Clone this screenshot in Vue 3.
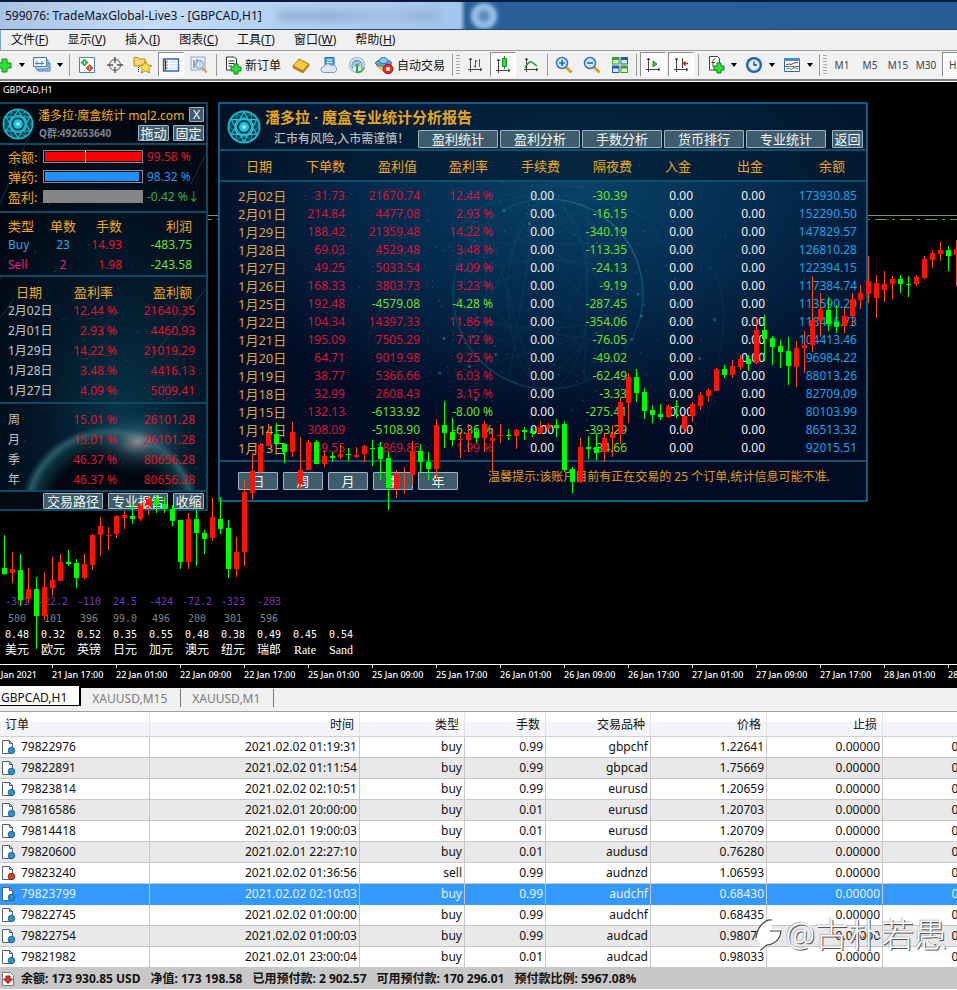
<script setup>
const menus = [
  ['文件', 'F'], ['显示', 'V'], ['插入', 'I'], ['图表', 'C'], ['工具', 'T'], ['窗口', 'W'], ['帮助', 'H'],
]
const frames = ['M1', 'M5', 'M15', 'M30']

// Each candle: high, low, body top, body bottom, 1 = red / 0 = green
const candles = [
  [535,575,568,574,0],[552,583,569,573,1],[554,606,570,600,0],[568,603,589,599,1],[577,649,589,616,0],
  [572,620,587,616,1],[557,596,580,588,1],[554,581,562,581,1],[550,566,562,564,0],[559,588,563,578,0],
  [554,579,564,578,1],[534,570,535,565,1],[517,556,526,535,1],[527,550,535,536,1],[515,538,516,534,1],
  [511,529,515,518,1],[503,524,516,519,0],[503,521,505,519,1],[496,515,499,505,1],[495,513,499,505,0],
  [497,513,504,509,0],[505,526,509,521,0],[520,569,520,562,0],[513,569,519,562,1],[510,566,519,533,0],
  [530,554,533,539,0],[498,541,517,538,1],[497,534,519,529,0],[520,578,528,569,0],[537,577,552,569,1],
  [481,566,492,552,1],[453,500,471,493,1],[443,473,445,472,1],[424,446,433,446,1],[423,446,434,444,0],
  [443,463,444,452,0],[422,457,432,452,1],[437,490,470,484,1],[440,470,442,470,1],[440,464,442,464,0],
  [450,467,456,464,1],[452,462,456,458,0],[445,459,454,457,1],[448,461,454,455,0],[447,458,455,457,1],
  [445,462,446,454,1],[440,466,448,449,0],[442,480,447,459,0],[452,510,458,488,0],[470,498,474,489,1],
  [467,494,481,482,1],[441,485,451,475,1],[444,472,451,462,0],[452,480,462,469,0],[419,480,425,469,1],
  [401,448,425,433,0],[418,446,432,440,0],[432,458,439,440,1],[424,452,433,440,1],[428,443,432,438,0],
  [421,452,424,438,1],[428,472,438,441,1],[424,443,435,436,1],[429,440,435,436,0],[429,449,430,436,1],
  [427,440,430,432,0],[428,437,431,433,0],[421,434,427,433,1],[423,430,425,428,1],[419,437,425,428,0],
  [421,472,424,470,0],[467,493,469,482,0],[438,483,447,482,1],[436,459,447,449,0],[433,460,447,453,0],
  [433,462,438,452,1],[425,457,434,438,1],[398,444,402,434,1],[373,423,377,403,1],[369,402,377,393,0],
  [388,419,392,411,0],[405,423,410,415,0],[404,420,414,417,0],[404,418,406,417,1],[400,418,406,407,0],
  [415,432,416,429,1],[402,422,404,416,1],[392,410,395,406,1],[388,402,390,396,1],[368,391,369,391,1],
  [365,378,369,375,0],[360,378,366,375,1],[355,370,359,367,1],[355,371,359,364,0],[317,364,330,363,1],
  [315,361,330,339,0],[336,365,338,347,0],[340,368,346,352,0],[337,385,351,366,0],[341,387,348,367,1],
  [331,373,345,348,1],[276,352,320,345,1],[293,337,309,321,1],[297,331,310,324,0],[305,333,322,327,0],
  [308,333,316,326,1],[293,325,299,316,1],[285,309,293,300,1],[256,303,281,294,1],[275,318,283,298,1],
  [271,302,284,290,1],[276,299,279,284,1],[275,293,279,284,0],[276,297,284,285,0],[275,286,277,284,1],
  [256,279,259,278,1],[250,268,253,260,1],[242,261,250,254,1],[246,271,250,256,0],[240,286,249,255,1],
].map(([high, low, top, bottom, red], i) => ({
  x: 4 + i * 8, high, low, top, size: Math.max(1, bottom - top), cls: red ? 'red' : 'green',
}))

const times = ['20 Jan 2021', '21 Jan 17:00', '22 Jan 01:00', '22 Jan 09:00', '22 Jan 17:00', '25 Jan 01:00', '25 Jan 09:00', '25 Jan 17:00', '26 Jan 01:00', '26 Jan 09:00', '26 Jan 17:00', '27 Jan 01:00', '27 Jan 09:00', '27 Jan 17:00', '28 Jan 01:00', '28 Jan 09:00']

const strengths = [
  ['-301', '500', '0.48', '美元'], ['-22.2', '101', '0.32', '欧元'], ['-110', '396', '0.52', '英镑'],
  ['24.5', '99.0', '0.35', '日元'], ['-424', '496', '0.55', '加元'], ['-72.2', '200', '0.48', '澳元'],
  ['-323', '301', '0.38', '纽元'], ['-203', '596', '0.49', '瑞郎'], ['', '', '0.45', 'Rate'], ['', '', '0.54', 'Sand'],
]

const gauges = [
  { name: '余额:', value: '99.58 %', kind: 'loss', fill: 100, mark: true },
  { name: '弹药:', value: '98.32 %', kind: 'ammo', fill: 98 },
  { name: '盈利:', value: '-0.42 %↓', kind: 'gain', fill: 100 },
]
const daily = [
  ['2月02日', '12.44 %', '21640.35'], ['2月01日', '2.93 %', '4460.93'], ['1月29日', '14.22 %', '21019.29'],
  ['1月28日', '3.48 %', '4416.13'], ['1月27日', '4.09 %', '5009.41'],
]
const periods = [
  ['周', '15.01 %', '26101.28'], ['月', '15.01 %', '26101.28'], ['季', '46.37 %', '80656.28'], ['年', '46.37 %', '80656.28'],
]

const reportTabs = ['盈利统计', '盈利分析', '手数分析', '货币排行', '专业统计']
const reportHead = ['日期', '下单数', '盈利值', '盈利率', '手续费', '隔夜费', '入金', '出金', '余额']
const reportRows = [
  ['2月02日', '31.73', '21670.74', '12.44 %', '-30.39', '173930.85'],
  ['2月01日', '214.84', '4477.08', '2.93 %', '-16.15', '152290.50'],
  ['1月29日', '188.42', '21359.48', '14.22 %', '-340.19', '147829.57'],
  ['1月28日', '69.03', '4529.48', '3.48 %', '-113.35', '126810.28'],
  ['1月27日', '49.25', '5033.54', '4.09 %', '-24.13', '122394.15'],
  ['1月26日', '168.33', '3803.73', '3.23 %', '-9.19', '117384.74'],
  ['1月25日', '192.48', '-4579.08', '-4.28 %', '-287.45', '113590.20'],
  ['1月22日', '104.34', '14397.33', '11.86 %', '-354.06', '118456.73'],
  ['1月21日', '195.09', '7505.29', '7.12 %', '-76.05', '104413.46'],
  ['1月20日', '64.71', '9019.98', '9.25 %', '-49.02', '96984.22'],
  ['1月19日', '38.77', '5366.66', '6.03 %', '-62.49', '88013.26'],
  ['1月18日', '32.99', '2608.43', '3.15 %', '-3.33', '82709.09'],
  ['1月15日', '132.13', '-6133.92', '-8.00 %', '-275.41', '80103.99'],
  ['1月14日', '308.09', '-5108.90', '-6.36 %', '-393.29', '86513.32'],
  ['1月13日', '139.55', '1869.86', '1.99 %', '-34.66', '92015.51'],
].map(([date, lots, profit, rate, swap, balance]) => ({ date, lots, profit, rate, swap, balance }))
const sign = (t) => (t.startsWith('-') ? 'minus' : 'plus')

const stars = Array.from({ length: 130 }, (_, i) => {
  const a = i * 2.399
  const r = 60 + ((i * 37) % 75)
  return { x: 328 + Math.cos(a) * r * (i % 3 === 0 ? 1.5 : 1), y: 190 + Math.sin(a) * r, r: i % 7 === 0 ? 2 : 1 }
})
const webs = Array.from({ length: 22 }, (_, i) => {
  const a = i * 0.286
  const b = a + 1.7 + (i % 4) * 0.3
  return { x1: 328 + Math.cos(a) * 94, y1: 190 + Math.sin(a) * 94, x2: 328 + Math.cos(b) * 94, y2: 190 + Math.sin(b) * 94 }
})
const dust = Array.from({ length: 60 }, (_, i) => ({ x: (i * 83) % 205, y: (i * 61 + 13) % 400 }))

const orderHead = ['订单', '时间', '类型', '手数', '交易品种', '价格', '止损', '止盈']
const orders = [
  ['79822976', '2021.02.02 01:19:31', 'buy', '0.99', 'gbpchf', '1.22641'],
  ['79822891', '2021.02.02 01:11:54', 'buy', '0.99', 'gbpcad', '1.75669'],
  ['79823814', '2021.02.02 02:10:51', 'buy', '0.99', 'eurusd', '1.20659'],
  ['79816586', '2021.02.01 20:00:00', 'buy', '0.01', 'eurusd', '1.20703'],
  ['79814418', '2021.02.01 19:00:03', 'buy', '0.01', 'eurusd', '1.20709'],
  ['79820600', '2021.02.01 22:27:10', 'buy', '0.01', 'audusd', '0.76280'],
  ['79823240', '2021.02.02 01:36:56', 'sell', '0.99', 'audnzd', '1.06593'],
  ['79823799', '2021.02.02 02:10:03', 'buy', '0.99', 'audchf', '0.68430'],
  ['79822745', '2021.02.02 01:00:00', 'buy', '0.99', 'audchf', '0.68435'],
  ['79822754', '2021.02.02 01:00:03', 'buy', '0.99', 'audcad', '0.98076'],
  ['79821982', '2021.02.01 23:00:04', 'buy', '0.01', 'audcad', '0.98033'],
]
const account = ['余额: 173 930.85 USD', '净值: 173 198.58', '已用预付款: 2 902.57', '可用预付款: 170 296.01', '预付款比例: 5967.08%']
</script>

<template>
  <div class="app">
    <svg width="0" height="0" class="defs" aria-hidden="true">
      <defs>
        <symbol id="seal" viewBox="0 0 32 32">
          <circle cx="16" cy="16" r="14.6" fill="#063a4c" stroke="#1fb4c8" stroke-width="1.8" />
          <g fill="none" stroke="#22c3d6" stroke-width="1.1">
            <path d="M16 2 28 23H4ZM16 30 4 9H28Z" />
            <path d="M2 16 23 4V28ZM30 16 9 4V28Z" stroke-width=".6" />
            <circle cx="16" cy="16" r="8.5" />
          </g>
          <circle cx="16" cy="16" r="4.8" fill="#19c8e0" /><circle cx="16" cy="16" r="1.6" fill="#d6ffff" />
        </symbol>
        <symbol id="cross" viewBox="0 0 12 12">
          <path d="M4 1h4v3h3v4H8v3H4V8H1V4h3z" fill="#2fe03a" stroke="#068a10" />
        </symbol>
      </defs>
    </svg>

    <header class="titlebar">
      <h1>599076: TradeMaxGlobal-Live3 - [GBPCAD,H1]</h1>
      <span class="haze"></span><span class="orb"></span>
    </header>

    <nav class="menubar">
      <a v-for="m in menus" :key="m[1]" href="#">{{ m[0] }}(<u>{{ m[1] }}</u>)</a>
    </nav>

    <div class="toolbar">
      <button class="tool first" aria-label="新建图表"><svg width="18" height="20"><path d="M2 4h5v4h4v5H7v4H2v-4h-6V8h6z" fill="#2fe03a" stroke="#068a10" /></svg></button>
      <button class="drop" aria-label="展开"><svg width="6" height="4"><path d="M0 0h6L3 4z" /></svg></button>
      <button class="tool" aria-label="模板窗口"><svg width="20" height="20"><path d="M6 8h12v8H6z" fill="#b7d0ee" stroke="#4b78b0" /><path d="M4 5h12v9H4z" fill="#d5e5f7" stroke="#4b78b0" /><path d="M1.500 2.500h13v9h-13z" fill="#f4f9ff" stroke="#4b78b0" /><path d="M3 8.500h9M5 6v4M10 6v4" stroke="#4b78b0" /></svg></button>
      <button class="drop" aria-label="展开"><svg width="6" height="4"><path d="M0 0h6L3 4z" /></svg></button>
      <i class="sep"></i>
      <button class="tool" aria-label="市场报价"><svg width="18" height="18"><path d="M1.500 1.500h15v15h-15z" fill="#fff" stroke="#4b83c4" /><path d="m6.500 3 3.500 3.500-3.500 3.500L3 6.500z" fill="#29c03a" stroke="#14751f" stroke-width=".6" /><path d="m11.500 8.500 3.500 3.500-3.500 3.500L8 12z" fill="#ef4a2c" stroke="#a02010" stroke-width=".6" /><path d="M6.500 5v3M11.500 10.500v3" stroke="#fff" /></svg></button>
      <button class="tool" aria-label="十字线"><svg width="18" height="18" fill="none" stroke="#555"><circle cx="9" cy="9" r="5.500" /><path d="M9 1v6M9 11v6M1 9h6M11 9h6" stroke-width="1.400" /></svg></button>
      <button class="tool" aria-label="导航"><svg width="20" height="20"><path d="M1 4V2.500h4L6 4h6v7H1z" fill="#f7d774" stroke="#b58a1c" /><path d="M5.500 12v6" stroke="#333" stroke-dasharray="1 1" /><path d="m12.500 6 2 4 4.500.500-3.300 3 .9 4.500-4.100-2.200L8.400 18l.9-4.500-3.300-3 4.500-.5z" fill="#ffe04a" stroke="#b58a1c" /></svg></button>
      <button class="tool pressed" aria-label="终端"><svg width="18" height="18"><path d="M1.500 3h15v12h-15z" fill="#fff" stroke="#2f66ad" stroke-width="1.400" /><path d="M3.500 4v10" stroke="#333" stroke-width="1.600" /><path d="M7 6h8M7 9h8M7 12h8" stroke="#bcd" /><path d="M5 6h1M5 9h1M5 12h1" stroke="#e03a2a" /></svg></button>
      <button class="tool" aria-label="策略测试"><svg width="20" height="20"><path d="M2 2h14v13H2z" fill="#e9f2fb" stroke="#8ba7c8" /><path d="M5 5v8M8 4v6M11 5v7" stroke="#555" /><circle cx="10.500" cy="9.500" r="4" fill="#cfe6fb" fill-opacity=".7" stroke="#6a94c4" /><path d="m13.500 13 4 4.500" stroke="#d9a334" stroke-width="2.500" /></svg></button>
      <i class="sep"></i>
      <button class="tool wide order"><svg width="18" height="20"><path d="M2.500 2h8l2 2v11h-10z" fill="#fff" stroke="#333" /><path d="M4.500 6h6M4.500 8.500h6M4.500 11h4" stroke="#333" /><use href="#cross" x="6" y="8" width="12" height="12" /></svg>新订单</button>
      <button class="tool" aria-label="编辑器"><svg width="18" height="18"><path d="m1 10 6-7 10 5-6 7z" fill="#f5c942" stroke="#ad7a0c" /><path d="M1 10v2l10 5 6-7V8l-6 7z" fill="#c98c10" stroke="#9a6a08" stroke-width=".6" /></svg></button>
      <button class="tool" aria-label="云服务"><svg width="18" height="18"><path d="M5 1.500h9v8H5z" fill="#4aa7ef" stroke="#1e6bb5" /><path d="M7 4h5M7 6.500h5" stroke="#fff" /><path d="M4 16.500a3 3 0 0 1 0-6 4 4 0 0 1 7-1 3.500 3.500 0 0 1 3.500 7z" fill="#dbe7f5" stroke="#7d9cc3" /></svg></button>
      <button class="tool" aria-label="信号"><svg width="18" height="18" fill="none"><circle cx="9" cy="9" r="7.500" stroke="#a9c3d6" stroke-width="1.500" fill="#e4eef5" /><path d="M5 12.500a5 5 0 1 1 8 0" stroke="#5f90c9" stroke-width="1.300" /><path d="M6.500 10.500a3 3 0 1 1 5 0" stroke="#5f90c9" /><path d="M9 9v8" stroke="#2f9d3a" stroke-width="2" /><circle cx="9" cy="9" r="1.800" fill="#2fae3a" /><path d="M10 16.500a7.500 7.500 0 0 0 6-5" stroke="#42b04c" stroke-width="2" /></svg></button>
      <button class="tool wide auto"><svg width="20" height="20"><path d="m2 10 8-2 8 2-6 8z" fill="#f6cf4a" stroke="#c08d15" /><ellipse cx="9.500" cy="8" rx="8" ry="3.200" fill="#5eaee6" stroke="#2b6ea8" /><path d="M5 7c0-6 9-6 9 0-2 2-7 2-9 0z" fill="#8ccaf3" stroke="#2b6ea8" /><circle cx="14" cy="14" r="4.800" fill="#e02f1c" stroke="#a81405" /><path d="M12.300 12.300h3.400v3.400h-3.400z" fill="#fff" /></svg>自动交易</button>
      <i class="sep"></i><i class="grip"></i>
      <button class="tool" aria-label="柱状图"><svg width="16" height="18" fill="none"><path d="M3.500 2v14M1 13.500h14M2 4l1.500-2L5 4M13 12l2 1.500-2 1.500" stroke="#444" /><path d="M8.500 4v8M6.500 10h2M8.500 5h2M12.500 3v8" stroke="#178c22" /></svg></button>
      <button class="tool pressed" aria-label="蜡烛图"><svg width="16" height="18" fill="none"><path d="M3.500 3v14M1 14.500h14M2 5l1.500-2L5 5M13 13l2 1.500-2 1.500" stroke="#444" /><path d="M9.500 0v13" stroke="#178c22" /><path d="M7.500 2.500h4v8h-4z" fill="#2ee03a" stroke="#178c22" /></svg></button>
      <button class="tool" aria-label="折线图"><svg width="16" height="18" fill="none"><path d="M3.500 2v14M1 13.500h14M2 4l1.500-2L5 4M13 12l2 1.500-2 1.500" stroke="#444" /><path d="M2 12c3-6 6-8 8-5l4 3" stroke="#178c22" stroke-width="1.300" /></svg></button>
      <i class="sep tight"></i>
      <button class="tool" aria-label="放大"><svg width="18" height="18"><path d="m10.500 10.500 6 6" stroke="#d3a128" stroke-width="3" /><circle cx="7" cy="7" r="5.500" fill="#d2eaff" stroke="#2f74c4" stroke-width="1.500" /><path d="M4 7h6M7 4v6" stroke="#2568b8" stroke-width="1.600" /></svg></button>
      <button class="tool" aria-label="缩小"><svg width="18" height="18"><path d="m10.500 10.500 6 6" stroke="#d3a128" stroke-width="3" /><circle cx="7" cy="7" r="5.500" fill="#d2eaff" stroke="#2f74c4" stroke-width="1.500" /><path d="M4 7h6" stroke="#2568b8" stroke-width="1.600" /></svg></button>
      <button class="tool" aria-label="平铺窗口"><svg width="18" height="18"><path d="M1 1h7.500v7.500H1z" fill="#3aa02c" /><path d="M9.500 1H17v7.500H9.500z" fill="#2458b8" /><path d="M1 9.500h7.500V17H1z" fill="#2458b8" /><path d="M9.500 9.500H17V17H9.500z" fill="#3aa02c" /><path d="M2 4h5.500v3.500H2zM10.500 4H16v3.500h-5.500zM2 12.500h5.500V16H2zM10.500 12.500H16V16h-5.500z" fill="#d8ecd0" /></svg></button>
      <i class="sep tight"></i>
      <button class="tool pressed" aria-label="自动滚动"><svg width="16" height="18" fill="none"><path d="M3.500 2v14M1 13.500h14M2 4l1.500-2L5 4M13 12l2 1.500-2 1.500" stroke="#444" /><path d="m8 5 4 3-4 3z" fill="#2ed03a" stroke="#178c22" /></svg></button>
      <button class="tool pressed" aria-label="图表平移"><svg width="16" height="18" fill="none"><path d="M3.500 2v14M1 13.500h14M2 4l1.500-2L5 4M13 12l2 1.500-2 1.500M9.500 2v10" stroke="#444" /><path d="M10 7.500h5M12.500 5.500l-2 2 2 2" stroke="#b42a1a" stroke-width="1.300" /></svg></button>
      <i class="sep"></i>
      <button class="tool" aria-label="指标"><svg width="18" height="20"><path d="M2.500 1.500h8l2 2V15h-10z" fill="#fff" stroke="#444" /><path d="M8 4c-2 0-2 1-2 3v5M4.500 7.500H8" stroke="#444" fill="none" /><use href="#cross" x="6" y="7" width="12" height="12" /></svg></button>
      <button class="drop" aria-label="展开"><svg width="6" height="4"><path d="M0 0h6L3 4z" /></svg></button>
      <button class="tool" aria-label="时间周期"><svg width="18" height="18"><circle cx="9" cy="9" r="8" fill="#1b5fae" /><circle cx="9" cy="9" r="5.500" fill="#e8f3fd" stroke="#7fb3e6" /><path d="M9 5.500V9h3" fill="none" stroke="#1a3e70" stroke-width="1.300" /></svg></button>
      <button class="drop" aria-label="展开"><svg width="6" height="4"><path d="M0 0h6L3 4z" /></svg></button>
      <button class="tool" aria-label="模板"><svg width="18" height="18"><path d="M1.500 2.500h15v13h-15z" fill="#fff" stroke="#2f66ad" /><path d="M1 2h16v3H1z" fill="#4b8ad2" /><path d="m3 9 3-1 2 .500L11 7l4-.500" stroke="#a02a1a" fill="none" /><path d="M3 13.500 6 12l2 1.500 3-2 4 1.500M2 10.500h14" stroke="#2f7a50" fill="none" stroke-width=".9" /></svg></button>
      <button class="drop" aria-label="展开"><svg width="6" height="4"><path d="M0 0h6L3 4z" /></svg></button>
      <i class="sep"></i><i class="grip"></i>
      <button v-for="f in frames" :key="f" class="tool frame">{{ f }}</button>
      <button class="tool frame pressed last">H1</button>
    </div>

    <main class="chart">
      <div class="plot">
        <p class="symbol">GBPCAD,H1</p>
        <i class="ask"></i>
        <svg class="bid" height="1" width="100%"><line x1="0" y1="0.5" x2="100%" y2="0.5" stroke="#4fa058" stroke-dasharray="12 5 3 5" /></svg>

        <section class="panel side">
          <svg class="sky" width="100%" height="100%" viewBox="0 0 206 406" preserveAspectRatio="none" aria-hidden="true">
            <defs>
              <radialGradient id="sun"><stop offset="0" stop-color="#b8a6a4" stop-opacity=".75" /><stop offset=".35" stop-color="#42697e" stop-opacity=".5" /><stop offset="1" stop-color="#06384e" stop-opacity="0" /></radialGradient>
              <radialGradient id="space" cx=".6" cy=".8" r=".75"><stop offset="0" stop-color="#08364c" /><stop offset=".5" stop-color="#03182a" /><stop offset="1" stop-color="#010812" /></radialGradient>
              <radialGradient id="globe"><stop offset=".66" stop-color="#010610" /><stop offset=".84" stop-color="#0b303a" /><stop offset=".92" stop-color="#2c606c" stop-opacity=".9" /><stop offset="1" stop-color="#1c4c5c" stop-opacity="0" /></radialGradient>
            </defs>
            <rect width="206" height="406" fill="url(#space)" />
            <circle v-for="(d, i) in dust" :key="i" :cx="d.x" :cy="d.y" r="0.6" fill="#2b5f78" />
            <path d="M30 30 0 100M206 50l-15 30M206 185l-55 70M14 195 0 215" stroke="#2a6f72" opacity=".45" />
            <ellipse cx="110" cy="408" rx="90" ry="86" fill="url(#globe)" />
            <ellipse cx="137" cy="339" rx="54" ry="34" fill="url(#sun)" />
            <rect y="389" width="206" height="17" fill="#020a14" />
          </svg>
          <header class="side-head">
            <svg class="seal" width="32" height="32"><use href="#seal" /></svg>
            <div class="side-title"><strong>潘多拉·魔盒统计 mql2.com</strong><button class="chip close">X</button></div>
            <div class="side-sub"><span>Q群:492653640</span><button class="chip">拖动</button><button class="chip">固定</button></div>
          </header>
          <div class="gauges">
            <div v-for="g in gauges" :key="g.name" class="gauge" :class="g.kind">
              <span class="name">{{ g.name }}</span>
              <span class="track"><span class="fill" :style="{ width: g.fill + '%' }"></span><i v-if="g.mark"></i></span>
              <span class="value">{{ g.value }}</span>
            </div>
          </div>
          <table class="mini positions">
            <thead><tr><th>类型</th><th>单数</th><th>手数</th><th>利润</th></tr></thead>
            <tbody>
              <tr class="buy"><td>Buy</td><td>23</td><td>14.93</td><td>-483.75</td></tr>
              <tr class="sell"><td>Sell</td><td>2</td><td>1.98</td><td>-243.58</td></tr>
            </tbody>
          </table>
          <table class="mini history">
            <thead><tr><th>日期</th><th>盈利率</th><th>盈利额</th></tr></thead>
            <tbody><tr v-for="d in daily" :key="d[0]"><td v-for="(c, j) in d" :key="j">{{ c }}</td></tr></tbody>
          </table>
          <table class="mini periods">
            <tbody><tr v-for="d in periods" :key="d[0]"><td v-for="(c, j) in d" :key="j">{{ c }}</td></tr></tbody>
          </table>
          <footer class="side-foot"><button class="chip long">交易路径</button><button class="chip long">专业报告</button><button class="chip">收缩</button></footer>
        </section>

        <section class="panel report">
          <svg class="sky" width="100%" height="100%" aria-hidden="true">
            <defs>
              <radialGradient id="sea" cx=".55" cy=".2" r=".62"><stop offset="0" stop-color="#084268" /><stop offset=".5" stop-color="#042a4c" /><stop offset="1" stop-color="#010c24" /></radialGradient>
              <linearGradient id="rim" x1="0" y1="1" x2="1" y2="0"><stop offset="0" stop-color="#1d7f96" /><stop offset=".5" stop-color="#0d5070" stop-opacity=".3" /><stop offset="1" stop-color="#37b7b0" /></linearGradient>
            </defs>
            <rect width="100%" height="100%" fill="url(#sea)" />
            <g fill="none" stroke="#2b8ba5" stroke-width=".6" opacity=".22">
              <line v-for="(w, i) in webs" :key="i" v-bind="w" />
              <ellipse cx="328" cy="190" rx="40" ry="94" /><ellipse cx="328" cy="190" rx="94" ry="34" />
              <path d="M150 230C190 110 300 60 420 110S500 230 485 330M230 130C300 60 380 70 440 130" />
            </g>
            <circle cx="328" cy="190" r="95" fill="none" stroke="url(#rim)" stroke-width="1.5" opacity=".6" />
            <circle v-for="(s, i) in stars" :key="'s' + i" :cx="s.x" :cy="s.y" :r="s.r * 0.8" fill="#37a5b4" opacity=".45" />
          </svg>
          <header class="report-head">
            <svg class="seal" width="34" height="34"><use href="#seal" /></svg>
            <div class="report-title">
              <h2>潘多拉 · 魔盒专业统计分析报告</h2>
              <div class="report-nav">
                <p>汇市有风险,入市需谨慎！</p>
                <button v-for="t in reportTabs" :key="t" class="chip tab">{{ t }}</button>
                <button class="chip back">返回</button>
              </div>
            </div>
          </header>
          <table class="ledger">
            <colgroup><col v-for="n in 9" :key="n" :class="'c' + n" /></colgroup>
            <thead><tr><th v-for="h in reportHead" :key="h">{{ h }}</th></tr></thead>
            <tbody>
              <tr v-for="r in reportRows" :key="r.date">
                <td>{{ r.date }}</td><td class="plus">{{ r.lots }}</td>
                <td :class="sign(r.profit)">{{ r.profit }}</td><td :class="sign(r.rate)">{{ r.rate }}</td>
                <td>0.00</td><td class="minus">{{ r.swap }}</td><td>0.00</td><td>0.00</td><td class="balance">{{ r.balance }}</td>
              </tr>
            </tbody>
          </table>
          <footer class="report-foot">
            <button v-for="p in ['日', '周', '月', '季', '年']" :key="p" class="chip period">{{ p }}</button>
            <p>温馨提示:该账户目前有正在交易的 25 个订单,统计信息可能不准.</p>
          </footer>
        </section>

        <div class="strength">
          <div v-for="s in strengths" :key="s[3]" class="currency">
            <span>{{ s[0] }}</span><span>{{ s[1] }}</span><span>{{ s[2] }}</span><span>{{ s[3] }}</span>
          </div>
        </div>

        <svg class="candles" width="960" height="582" viewBox="0 82 960 582" shape-rendering="crispEdges" aria-hidden="true">
          <g v-for="c in candles" :key="c.x" :class="c.cls">
            <rect class="wick" :x="c.x" :y="c.high" width="1" :height="c.low - c.high" />
            <rect class="body" :x="c.x - 2" :y="c.top" width="5" :height="c.size" />
          </g>
        </svg>
      </div>
      <div class="axis"><span v-for="t in times" :key="t">{{ t }}</span></div>
    </main>

    <nav class="tabs">
      <a class="active" href="#">GBPCAD,H1</a><a href="#">XAUUSD,M15</a><a href="#">XAUUSD,M1</a>
    </nav>

    <section class="terminal">
      <table class="orders">
        <colgroup><col v-for="n in 8" :key="n" :class="'o' + n" /></colgroup>
        <thead><tr><th v-for="h in orderHead" :key="h">{{ h }}</th></tr></thead>
        <tbody>
          <tr v-for="(o, i) in orders" :key="o[0]" :class="{ selected: i === 7 }">
            <td><span class="ticket"><svg width="15" height="16"><path d="M1.500 1.500h7l3 3v10h-10z" fill="#fff" stroke="#55626e" /><path d="M8.500 1.500v3h3z" fill="#dde5ec" stroke="#55626e" /><circle cx="10.500" cy="11.500" r="3.200" :fill="o[2] === 'sell' ? '#d8411f' : '#2b93cf'" :stroke="o[2] === 'sell' ? '#8d200c' : '#135e91'" /></svg>{{ o[0] }}</span></td>
            <td v-for="(c, j) in o.slice(1)" :key="j">{{ c }}</td><td>0.00000</td><td>0.00000</td>
          </tr>
        </tbody>
      </table>
      <div class="watermark">
        <svg width="30" height="38"><path d="M2 20C4 10 14 4 20 5c-2 3-3 5-3 8h10c0 10-8 15-15 16-3 1-5 4-7 6 0-4 1-6 2-8-3-1-4-4-5-7z" fill="#fff" /><path d="M2 22C3 11 11 3 18 4M16 15h11c-1 9-7 13-14 14-3 1-4 5-7 5" fill="none" stroke="#444" stroke-width="1.200" /></svg>
        <span>@古朴若愚</span>
      </div>
    </section>

    <footer class="status">
      <svg width="14" height="16"><path d="M1.500 1.500h8l3 3v10h-11z" fill="#fff" stroke="#777" /><path d="M5 5h4v3h2.500L7 12.500 2.500 8H5z" fill="#d63a1a" stroke="#8d1d0a" /></svg>
      <span v-for="a in account" :key="a">{{ a }}</span>
    </footer>
  </div>
</template>

<style>
body { background: #fff; }
</style>

<style scoped>
.app { font-family: "Noto Sans", "Noto Sans CJK SC", sans-serif; font-size: 12px; color: #111; overflow: hidden; }
.app *, .app { box-sizing: border-box; }
.defs { display: block; height: 0; }
button { font: inherit; color: inherit; border: 0; padding: 0; background: none; white-space: nowrap; }
a { color: inherit; text-decoration: none; }
h1, h2, p { margin: 0; font-weight: 400; }
table { border-spacing: 0; table-layout: fixed; }
td, th { padding: 0; font-weight: 400; white-space: nowrap; }

.titlebar { position: relative; display: flex; align-items: center; height: 30px; padding-left: 5px; border-top: 2px solid #0a1a3c; border-bottom: 1px solid #27466c; overflow: hidden;
  background: linear-gradient(90deg, #a9c3e2 0, #c3dcf8 150px, #b4d0f0 300px, #a4c6ec 460px, #2a6099 466px, #285d97 100%); }
.titlebar h1 { font-size: 12px; line-height: 16px; color: #10131c; }
.haze { width: 160px; height: 10px; margin-left: 16px; background: linear-gradient(90deg, #8fb0d8, #8cadd6, #a0c0e4, #8cadd6); filter: blur(4px); }
.orb { width: 26px; height: 26px; margin-left: 33px; border-radius: 50%; background: radial-gradient(#5583bb 15%, #a3c8ee 50%); filter: blur(2px); }

.menubar { display: flex; align-items: center; gap: 19px; height: 20px; padding-left: 10px; background: #f0f0f0; border-left: 1px solid #7aa2d0; }
.menubar a { line-height: 18px; }

.toolbar { display: flex; align-items: center; height: 31px; padding-bottom: 1px; background: #f1f1f1; border-top: 1px solid #a0a0a0; border-bottom: 2px solid #808080; box-shadow: 0 1px #fff; overflow: hidden; margin-bottom: 1px; }
.tool { display: flex; flex: none; align-items: center; justify-content: center; width: 28px; height: 25px; }
.tool.first { width: 18px; }
.tool.wide { justify-content: flex-start; gap: 3px; padding-left: 4px; }
.tool.order { width: 67px; }
.tool.auto { width: 78px; padding-left: 3px; }
.tool.frame { font-size: 10px; color: #444; }
.tool.pressed { width: 26px; margin: 0 1px; background: #fafafa; border: 1px solid #fff; border-top-color: #8d8d8d; border-left-color: #8d8d8d; }
.tool.last { justify-content: flex-start; padding-left: 6px; margin-left: 2px; }
.drop { display: flex; flex: none; width: 10px; padding-left: 1px; }
.sep { flex: none; width: 1px; height: 22px; margin: 0 3px; background: #9c9c9c; }
.sep.tight { margin: 0 2px; }
.grip { flex: none; width: 4px; height: 20px; margin-right: 1px; background: repeating-linear-gradient(#a8a8a8 0 1px, #f1f1f1 1px 3px); }

.chart { background: #000; color: #fff; }
.plot { position: relative; height: 583px; border-bottom: 1px solid #fff; overflow: hidden; }
.symbol { padding: 1px 3px; font-size: 9px; line-height: 14px; }
.ask { position: absolute; top: 133px; left: 0; right: 0; height: 1px; background: #7f8f88; }
.bid { position: absolute; top: 137px; left: 0; }
.candles { position: absolute; top: 0; left: 0; pointer-events: none; }
.red .wick { fill: #ff4a12; }
.red .body { fill: #ff1200; }
.green rect { fill: #00ff00; }

.panel { position: absolute; top: 20px; border: 2px solid #0a5f86; isolation: isolate; }
.sky { position: absolute; inset: 0; z-index: -1; }
.side { left: -2px; width: 210px; border-color: #0b4a62; }
.report { left: 218px; width: 650px; }
.chip { height: 16px; width: 31px; line-height: 14px; font-size: 13px; text-align: center; color: #f4f8fa; background: #3f5c6c; border: 1px solid #9fb6c2; border-radius: 1px; }
.seal { display: block; flex: none; }

.side-head { display: grid; grid-template-columns: 32px 1fr; column-gap: 4px; align-content: center; height: 41px; padding: 0 2px 0 2px; border-bottom: 2px solid #0b4a62; }
.side-head .seal { grid-row: 1 / 3; align-self: center; }
.side-title, .side-sub { display: flex; align-items: center; justify-content: space-between; height: 18px; white-space: nowrap; }
.side-title strong { font-weight: 400; font-size: 12px; color: #f2a81d; }
.side-title .close { width: 15px; height: 15px; line-height: 13px; }
.side-sub { gap: 4px; }
.side-sub span { flex: 1; font-size: 10px; font-weight: 700; color: #7d858b; margin-left: 1px; }

.gauges { padding: 1px 0 5px; border-bottom: 2px solid #0b4a62; }
.gauge { display: flex; align-items: center; height: 20px; padding-left: 8px; font-size: 12px; }
.gauge .name { width: 35px; font-size: 13px; color: #f2a81d; }
.track { position: relative; width: 100px; height: 13px; padding: 1px; border: 1px solid #8b8f92; }
.track i { position: absolute; left: 41px; top: 0; width: 1px; height: 11px; background: #fff; }
.fill { display: block; height: 9px; background: #ff0000; }
.value { padding-left: 4px; color: #e0142c; }
.ammo .fill { background: #1e90ff; }
.ammo .value { color: #2b93ea; }
.gain .track { padding: 0; border-color: #858585; }
.gain .fill { height: 11px; background: #858585; }
.gain .value { color: #3cae4a; }

.mini { width: 100%; font-size: 12px; text-align: right; color: #e0142c; border-bottom: 2px solid #0b4a62; }
.mini th { font-size: 13px; line-height: 18px; height: 18px; color: #f2a81d; }
.mini td { height: 20px; line-height: 20px; }
.mini th:first-child, .mini td:first-child { text-align: left; padding-left: 8px; }
.mini td:first-child { color: #c3c6c8; }
.positions { padding: 4px 14px 0 0; }
.positions td:last-child { color: #6fe02a; }
.positions th:nth-child(2), .positions td:nth-child(2) { text-align: center; }
.positions th:first-child { width: 46px; }
.positions th:nth-child(2) { width: 34px; }
.positions th:nth-child(3) { width: 42px; }
.positions .buy td:nth-child(-n+2) { color: #35a6dc; }
.positions .sell td:nth-child(-n+2) { color: #e0218a; }
.history, .periods { padding-right: 11px; }
.history { padding-top: 6px; padding-bottom: 1px; }
.history th:first-child { width: 66px; padding-left: 16px; }
.history th:nth-child(2) { width: 51px; padding-right: 4px; }
.history th:last-child { padding-right: 3px; }
.periods { padding-top: 6px; }
.periods td:first-child { width: 66px; }
.periods td:nth-child(2) { width: 51px; }
.side-foot { display: flex; justify-content: flex-end; align-items: center; gap: 5px; height: 17px; padding-right: 2px; }
.chip.long { width: 60px; }

.report-head { display: flex; align-items: center; gap: 4px; height: 47px; padding-left: 7px; background: rgba(2, 22, 42, .6); border-bottom: 2px solid #0f4f68; }
.report-title { flex: 1; }
.report-title h2 { font-size: 15px; line-height: 24px; font-weight: 700; color: #e5a521; }
.report-nav { display: flex; align-items: center; gap: 2px; height: 19px; padding-right: 3px; }
.report-nav p { width: 151px; padding-left: 9px; line-height: 16px; color: #b6babe; font-weight: 500; white-space: nowrap; }
.chip.tab { width: 80px; height: 18px; line-height: 16px; }
.chip.back { height: 18px; line-height: 16px; margin-left: auto; }

.ledger { width: 100%; text-align: right; }
.ledger .c1 { width: 85px; } .ledger .c2 { width: 40px; } .ledger .c3 { width: 75px; }
.ledger .c4 { width: 73px; } .ledger .c5 { width: 67px; } .ledger .c6 { width: 72px; }
.ledger .c7 { width: 61px; } .ledger .c8 { width: 72px; } .ledger .c9 { width: 101px; }
.ledger th { height: 31px; font-size: 13px; color: #f2a81d; background: rgba(2, 22, 42, .6); border-bottom: 2px solid #0f4f68; }
.ledger th:first-child { text-align: left; padding-left: 26px; }
.ledger th:nth-child(3) { padding-right: 3px; }
.ledger th:nth-child(4) { padding-right: 5px; }
.ledger th:nth-child(7), .ledger th:nth-child(8) { padding-right: 2px; }
.ledger th:last-child { padding-right: 21px; }
.ledger tbody::before { content: ""; display: block; height: 5px; }
.ledger td { height: 18px; line-height: 18px; color: #eef2f4; }
.ledger td:first-child { text-align: left; padding-left: 18px; font-size: 13px; color: #dca63a; }
.ledger td:nth-child(5) { padding-right: 6px; }
.ledger td:nth-child(6) { padding-right: 5px; }
.ledger td:last-child { padding-right: 9px; }
.ledger td.plus { color: #d8143a; }
.ledger td.minus { color: #6fe02a; }
.ledger td.balance { color: #1ea2e4; }
.report-foot { display: flex; align-items: center; gap: 5px; height: 40px; margin-top: 3px; padding-left: 18px; border-top: 2px solid #0f4f68; }
.chip.period { width: 40px; height: 18px; line-height: 16px; }
.report-foot p { margin: 0 0 8px 25px; line-height: 18px; color: #e89a1c; white-space: nowrap; }

.strength { position: absolute; left: -1px; bottom: 6px; display: flex; }
.currency { display: grid; grid-template-rows: 18px 17px 15px 16px; width: 36px; justify-items: center; align-items: center; font-family: "DejaVu Sans Mono", "Noto Sans CJK SC", monospace; font-size: 10px; line-height: 15px; white-space: nowrap; }
.currency span:first-child { color: #7a35c8; }
.currency span:nth-child(2) { color: #7d858b; }
.currency span:last-child { font-size: 12px; font-family: "Liberation Serif", "Noto Sans CJK SC", serif; }

.axis { display: flex; height: 21px; margin-left: -12px; overflow: hidden; }
.axis span { flex: none; width: 64px; font-size: 9px; line-height: 19px; font-weight: 500; white-space: nowrap; background: linear-gradient(#fff, #fff) 0 0 / 1px 3px no-repeat; }

.tabs { display: flex; height: 26px; background: #f0f0f0; border-top: 2px solid #000; border-bottom: 1px solid #a0a0a0; color: #7c7c7c; }
.tabs a { height: 18px; padding: 0 13px 0 11px; line-height: 20px; margin-top: 1px; border-right: 1px solid #777; }
.tabs a.active { height: 20px; margin-top: -2px; padding: 2px 12px 0 1px; color: #111; background: #fff; border-right: 2px solid #000; border-bottom: 1px solid #000; }

.terminal { position: relative; overflow: hidden; background: #fff; }
.orders { width: 999px; text-align: right; }
.orders .o1 { width: 150px; } .orders .o2 { width: 210px; } .orders .o3 { width: 105px; } .orders .o4 { width: 81px; }
.orders .o5 { width: 105px; } .orders .o6 { width: 116px; } .orders .o7 { width: 116px; } .orders .o8 { width: 116px; }
.orders th { height: 25px; padding-right: 5px; background: linear-gradient(#fff 40%, #f4f5f8 41%); border-right: 1px solid #e2e4e8; border-bottom: 1px solid #d0d0d0; }
.orders th:first-child { text-align: left; padding-left: 5px; }
.orders td { height: 21px; line-height: 20px; padding-right: 2px; border-right: 1px solid #c8c8c8; border-bottom: 1px solid #c8c8c8; }
.orders td:first-child { text-align: left; padding-left: 1px; }
.orders tr:nth-child(even) td { background: #e9e9e9; }
.orders .selected td, .orders tr.selected:nth-child(even) td { background: #3399ff; color: #e4f2ff; border-bottom-color: #3399ff; }
.ticket { display: flex; align-items: center; gap: 5px; height: 20px; }
.watermark { position: absolute; right: 10px; bottom: 12px; display: flex; align-items: center; gap: 2px; font-size: 33px; line-height: 42px; font-weight: 300; color: #fff; text-shadow: 1px 1px 0 #555, -1px -1px 1px #bbb; white-space: nowrap; }

.status { display: flex; align-items: center; gap: 10px; height: 21px; padding-left: 1px; background: #c8c8c8; font-weight: 700; line-height: 20px; white-space: nowrap; overflow: hidden; }
.status svg { margin-right: -4px; }
</style>
